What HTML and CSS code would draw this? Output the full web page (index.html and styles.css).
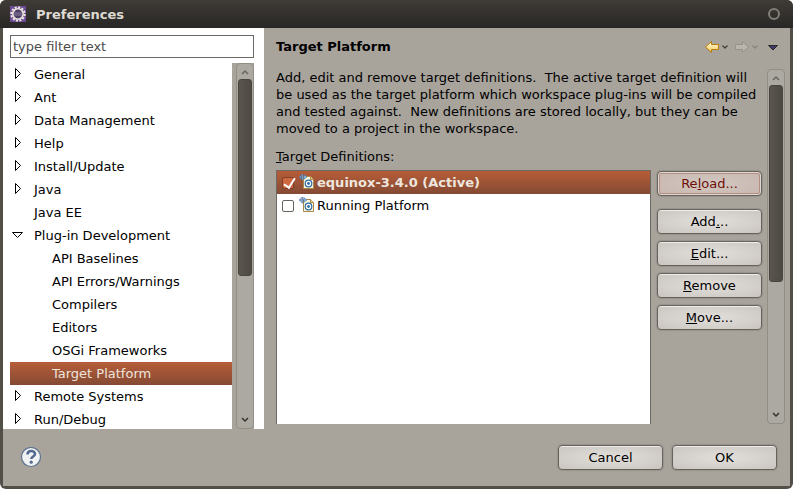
FILE: index.html
```html
<!DOCTYPE html>
<html lang="en">
<head>
<meta charset="utf-8">
<title>Preferences</title>
<link rel="stylesheet" href="styles.css">
</head>
<body>
<svg class="defs" aria-hidden="true">
  <defs>
    <linearGradient id="gold" x2="0" y2="1"><stop stop-color="#fffce0"/><stop offset="1" stop-color="#f5c858"/></linearGradient>
    <g id="closed"><path d="M5.500 5.500v10l5-5z" fill="#fff" stroke="#000"/></g>
    <g id="target">
      <path d="M4.500 2.500h7l3 3v9h-10z" fill="#fdf8df" stroke="#aa8848"/>
      <path d="M11.500 2.500v3h3" fill="#f3d88c" stroke="#aa8848"/>
      <path d="M0 3l2-1.500v3zM2.800 0h1.200v6H2.800zM5 .8L8 3 5 5.200z" fill="#a3c4e6" stroke="#3c6ba3" stroke-width=".6"/>
      <circle cx="9.500" cy="9.500" r="3.300" fill="#fff" stroke="#2e6ca3" stroke-width="1.200"/>
      <circle cx="9.500" cy="9.500" r="1.400" fill="#2e6ca3"/>
    </g>
  </defs>
</svg>
<div class="window">
  <header class="titlebar">
    <svg class="app-icon" width="16" height="16" viewBox="0 0 16 16" aria-hidden="true">
      <path d="M0 0h16v16H0z" fill="#6b4a94"/>
      <circle cx="8" cy="8" r="6.700" fill="none" stroke="#eee9df" stroke-width="2" stroke-dasharray="2.100 1.400"/>
      <circle cx="8" cy="8" r="5.200" fill="#4b3c63" stroke="#e9e5dc" stroke-width="1.600"/>
      <path d="M4 7h8M4 9h8" stroke="#8d80a4"/>
    </svg>
    <h1>Preferences</h1>
    <button class="close" aria-label="Close"></button>
  </header>
  <div class="content">
    <nav class="sidebar">
      <input class="filter" type="text" placeholder="type filter text" aria-label="Filter">
      <div class="tree-view">
        <ul class="tree">
          <li><svg class="twisty"><use href="#closed"/></svg>General</li>
          <li><svg class="twisty"><use href="#closed"/></svg>Ant</li>
          <li><svg class="twisty"><use href="#closed"/></svg>Data Management</li>
          <li><svg class="twisty"><use href="#closed"/></svg>Help</li>
          <li><svg class="twisty"><use href="#closed"/></svg>Install/Update</li>
          <li><svg class="twisty"><use href="#closed"/></svg>Java</li>
          <li class="leaf">Java EE</li>
          <li><svg class="twisty"><path d="M2.500 8.500h10l-5 5z" fill="#fff" stroke="#000"/></svg>Plug-in Development</li>
          <li class="child">API Baselines</li>
          <li class="child">API Errors/Warnings</li>
          <li class="child">Compilers</li>
          <li class="child">Editors</li>
          <li class="child">OSGi Frameworks</li>
          <li class="child selected">Target Platform</li>
          <li><svg class="twisty"><use href="#closed"/></svg>Remote Systems</li>
          <li><svg class="twisty"><use href="#closed"/></svg>Run/Debug</li>
        </ul>
        <div class="scrollbar">
          <svg class="arrow" viewBox="0 0 16 15"><path d="M5 10l3-3 3 3" fill="none" stroke="#69665f" stroke-width="1.500"/></svg>
          <div class="track"><div class="thumb"></div></div>
          <svg class="arrow" viewBox="0 0 16 15"><path d="M5 5l3 3 3-3" fill="none" stroke="#35332f" stroke-width="1.500"/></svg>
        </div>
      </div>
    </nav>
    <main class="page">
      <div class="page-head">
        <h2>Target Platform</h2>
        <svg class="history" width="74" height="16" viewBox="0 0 74 16" role="img" aria-label="Navigation history">
          <path d="M.5 9l6-5.500v3h7v5h-7v3z" fill="url(#gold)" stroke="#b97b0b" stroke-linejoin="round"/>
          <path d="M17.500 7.500L20 10l2.500-2.500" fill="none" stroke="#45423d" stroke-width="1.300"/>
          <path d="M43.500 9l-6-5.500v3h-7v5h7v3z" fill="#b9b5ae" stroke="#96928a" stroke-linejoin="round"/>
          <path d="M47.500 7.500L50 10l2.500-2.500" fill="none" stroke="#89857c" stroke-width="1.300"/>
          <path d="M63.500 7.500h9L68 12z" fill="#43386f" stroke="#292926"/>
        </svg>
      </div>
      <div class="page-scroll">
        <div class="page-body">
          <p>Add, edit and remove target definitions.&nbsp; The active target definition will be used as the target platform which workspace plug-ins will be compiled and tested against.&nbsp; New definitions are stored locally, but they can be moved to a project in the workspace.</p>
          <h3><u>T</u>arget Definitions:</h3>
          <div class="definitions">
            <div class="list">
              <table>
                <tr class="selected"><td><label><input type="checkbox" checked><svg class="target"><use href="#target"/></svg>equinox-3.4.0 (Active)</label></td></tr>
                <tr><td><label><input type="checkbox"><svg class="target"><use href="#target"/></svg>Running Platform</label></td></tr>
              </table>
            </div>
            <div class="actions">
              <button class="btn reload">Re<u>l</u>oad...</button>
              <button class="btn">Add<u>.</u>..</button>
              <button class="btn"><u>E</u>dit...</button>
              <button class="btn"><u>R</u>emove</button>
              <button class="btn"><u>M</u>ove...</button>
            </div>
          </div>
        </div>
        <div class="scrollbar">
          <svg class="arrow" viewBox="0 0 16 15"><path d="M5 10l3-3 3 3" fill="none" stroke="#69665f" stroke-width="1.500"/></svg>
          <div class="track"><div class="thumb page-thumb"></div></div>
          <svg class="arrow" viewBox="0 0 16 15"><path d="M5 5l3 3 3-3" fill="none" stroke="#35332f" stroke-width="1.500"/></svg>
        </div>
      </div>
    </main>
  </div>
  <footer class="footer">
    <button class="help" aria-label="Help">
      <svg width="22" height="22" viewBox="0 0 22 22"><circle cx="11" cy="10" r="9.500" fill="#f1f2f3" stroke="#5d7290" stroke-width="1.200"/><path d="M7.500 7.500c0-4.500 7.500-4.500 7.500-.5 0 2.500-3.700 2.500-3.700 5" fill="none" stroke="#53698f" stroke-width="2.600"/><circle cx="11.200" cy="15.200" r="1.600" fill="#53698f"/></svg>
    </button>
    <button class="btn">Cancel</button>
    <button class="btn">OK</button>
  </footer>
</div>
</body>
</html>
```
FILE: styles.css
```css
* { box-sizing: border-box; }

body {
  margin: 0;
  background: #fff;
  color: #000;
  font: 13px/17px "DejaVu Sans", sans-serif;
}

button, input { font: inherit; color: inherit; }
h1, h2, h3, p, ul { margin: 0; padding: 0; font-size: inherit; }
.defs { position: absolute; width: 0; height: 0; }

.window {
  display: flex;
  flex-direction: column;
  height: 100vh;
  overflow: hidden;
  border-radius: 6px;
  background: #524e48;
}

.titlebar {
  display: flex;
  align-items: center;
  gap: 10px;
  flex: none;
  height: 28px;
  padding: 0 13px 0 10px;
  background: linear-gradient(#3f3b37, #282725);
  color: #dfdbd2;
}
.titlebar h1 { flex: 1; }
.close {
  width: 12px;
  height: 12px;
  padding: 0;
  border: 2px solid #817e77;
  border-radius: 50%;
  background: none;
}

.content {
  display: flex;
  flex: 1;
  min-height: 0;
  margin: 0 3px;
  background: #a8a49c;
}

.sidebar {
  display: flex;
  flex-direction: column;
  flex: 0 0 261px;
  gap: 5px;
  padding: 7px 10px 0 7px;
  background: #fff;
}
.filter {
  flex: none;
  width: 100%;
  height: 23px;
  padding: 0 2px;
  border: 1px solid #6b6963;
  background: #fff;
}
.filter::placeholder { color: #4c4c4c; opacity: 1; }
.tree-view { display: flex; flex: 1; min-height: 0; background: #a8a49c; }
.tree {
  flex: 1;
  margin-right: 4px;
  overflow: hidden;
  background: #fff;
  list-style: none;
}
.tree li {
  display: flex;
  align-items: center;
  height: 23px;
  white-space: nowrap;
}
.tree .leaf { padding-left: 24px; }
.tree .child { padding-left: 42px; }
.twisty { flex: none; width: 24px; height: 23px; }
.selected { background: linear-gradient(#b75d38, #844a34); color: #ede6df; }

.scrollbar {
  display: flex;
  flex-direction: column;
  flex: none;
  width: 18px;
  border: 1px solid #928e84;
  border-radius: 4px;
  background: #aca8a2;
}
.arrow { flex: none; width: 16px; height: 15px; }
.track { flex: 1; padding: 0 1px; }
.thumb {
  height: 59%;
  border: 1px solid #48453f;
  border-radius: 3px;
  background: linear-gradient(90deg, #5a564f, #4d4943);
}
.page-thumb { height: 61%; }

.page {
  display: flex;
  flex-direction: column;
  flex: 1;
  min-width: 0;
  padding: 8px 5px 5px 12px;
}
.page-head {
  display: flex;
  justify-content: space-between;
  align-items: center;
  flex: none;
  height: 20px;
  padding-right: 6px;
  margin-bottom: 13px;
}
.page-scroll { display: flex; flex: 1; gap: 5px; min-height: 0; }
.page-body { display: flex; flex-direction: column; flex: 1; min-width: 0; }
h3 { margin: 11px 0 5px; font-weight: normal; }
.definitions { display: flex; flex: 1; gap: 6px; min-height: 0; }
.list {
  flex: 1;
  border: 1px solid #6b6963;
  border-bottom: 0;
  background: #fff;
}
table { width: 100%; border-collapse: collapse; }
td { height: 23px; padding: 0; }
label { display: flex; align-items: center; }
tr.selected { font-weight: bold; }
input[type="checkbox"] {
  appearance: none;
  flex: none;
  width: 12px;
  height: 12px;
  margin: 0 5px;
  border: 1px solid #68645e;
  border-radius: 2px;
  background: #fff;
}
input[type="checkbox"]:checked {
  border-color: #7e3f29;
  background: #cf673f;
}
input[type="checkbox"]:checked::after {
  content: "";
  display: block;
  width: 5px;
  height: 10px;
  margin: -2px 0 0 3px;
  border: solid #fff;
  border-width: 0 2px 2px 0;
  transform: rotate(32deg);
}
.target { flex: none; width: 16px; height: 17px; margin-right: 2px; }
.actions { display: flex; flex-direction: column; gap: 7px; }

.btn {
  width: 105px;
  height: 25px;
  padding: 0;
  border: 1px solid #66625c;
  border-radius: 4px;
  background: radial-gradient(ellipse at center, #e2dfdb, #cac5c0);
  box-shadow: inset 0 1px #efedeb, 0 0 1px 1px #97938b;
}
.actions .reload {
  margin: 1px 0 6px;
  background: radial-gradient(ellipse at center, #d2c8c2, #c7b6ae);
  box-shadow: inset 0 0 0 1px #e0d8d4, inset 0 0 0 2px #b58e82, 0 0 1px 1px #97938b;
  color: #6e0e07;
}

.footer {
  display: flex;
  align-items: center;
  gap: 9px;
  flex: none;
  height: 57px;
  margin: 0 3px 3px;
  padding: 0 13px 0 17px;
  background: #a8a49c;
}
.help {
  width: 22px;
  height: 22px;
  margin-right: auto;
  padding: 0;
  border: 0;
  background: none;
}
.help svg { display: block; }
```
